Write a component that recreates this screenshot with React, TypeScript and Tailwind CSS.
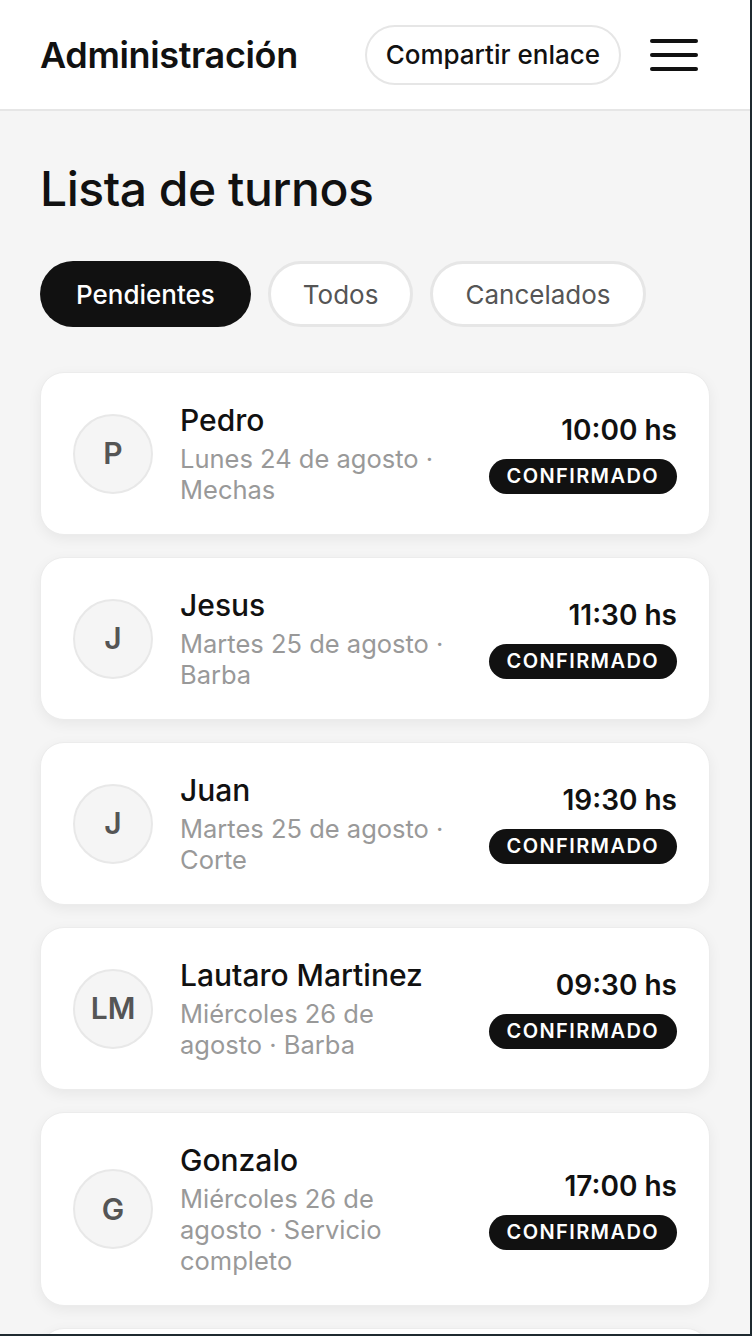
type Turno = {
  initials: string;
  name: string;
  detail: string;
  time: string;
};

const turnos: Turno[] = [
  { initials: "P", name: "Pedro", detail: "Lunes 24 de agosto · Mechas", time: "10:00 hs" },
  { initials: "J", name: "Jesus", detail: "Martes 25 de agosto · Barba", time: "11:30 hs" },
  { initials: "J", name: "Juan", detail: "Martes 25 de agosto · Corte", time: "19:30 hs" },
  { initials: "LM", name: "Lautaro Martinez", detail: "Miércoles 26 de agosto · Barba", time: "09:30 hs" },
  { initials: "G", name: "Gonzalo", detail: "Miércoles 26 de agosto · Servicio completo", time: "17:00 hs" },
  { initials: "M", name: "Marcos", detail: "Jueves 27 de agosto · Corte", time: "12:00 hs" },
];

function TurnoCard({ turno }: { turno: Turno }) {
  return (
    <div className="flex items-center gap-[27px] rounded-[24px] border border-[#ececec] bg-white px-[32px] py-[29px] shadow-[0_4px_14px_rgba(0,0,0,0.06)]">
      <div className="flex h-[80px] w-[80px] shrink-0 items-center justify-center rounded-full border-2 border-[#e8e8e8] bg-[#f5f5f5] text-[30px] font-semibold text-[#555]">
        {turno.initials}
      </div>
      <div className="min-w-0 flex-1">
        <div className="text-[30px] font-medium leading-[36px] text-[#111]">{turno.name}</div>
        <div className="mt-[5px] text-[25.5px] leading-[31px] text-[#999]">{turno.detail}</div>
      </div>
      <div className="flex shrink-0 flex-col items-end gap-[12px]">
        <div className="text-[28px] font-semibold leading-[34px] text-[#111]">{turno.time}</div>
        <span className="rounded-full bg-[#111] px-[18px] text-[20px] font-semibold leading-[35px] tracking-[0.07em] text-white">
          CONFIRMADO
        </span>
      </div>
    </div>
  );
}

export default function App() {
  return (
    <div className="h-[1336px] w-[752px] overflow-hidden border-b-2 border-r-2 border-[#1f2a30] bg-[#f5f5f5] font-['Inter',sans-serif]">
      <header className="flex h-[111px] items-center justify-between border-b-2 border-[#e6e6e6] bg-white pl-10 pr-[52px]">
        <h1 className="text-[36px] font-semibold tracking-[-0.01em] text-[#111]">Administración</h1>
        <div className="flex items-center gap-[29px]">
          <button className="h-[60px] rounded-full border-2 border-[#e6e6e6] bg-white px-[19px] text-[26px] font-medium text-[#111]">
            Compartir enlace
          </button>
          <button className="flex h-[48px] w-[48px] flex-col justify-center gap-[10px]">
            <span className="h-[4px] w-full rounded-full bg-[#111]" />
            <span className="h-[4px] w-full rounded-full bg-[#111]" />
            <span className="h-[4px] w-full rounded-full bg-[#111]" />
          </button>
        </div>
      </header>
      <main className="px-10 pt-[50px]">
        <h2 className="text-[48px] font-medium leading-[56px] tracking-[-0.01em] text-[#111]">Lista de turnos</h2>
        <div className="mt-[44px] flex gap-[17px]">
          <button className="h-[66px] rounded-full bg-[#111] px-[36px] text-[26px] font-medium text-white">Pendientes</button>
          <button className="h-[66px] rounded-full border-[3px] border-[#e6e6e6] bg-white px-[32px] text-[26px] text-[#555]">Todos</button>
          <button className="h-[66px] rounded-full border-[3px] border-[#e6e6e6] bg-white px-[32px] text-[26px] text-[#555]">Cancelados</button>
        </div>
        <div className="mt-[45px] flex flex-col gap-[22px]">
          {turnos.map((t, i) => (
            <TurnoCard key={i} turno={t} />
          ))}
        </div>
      </main>
    </div>
  );
}
